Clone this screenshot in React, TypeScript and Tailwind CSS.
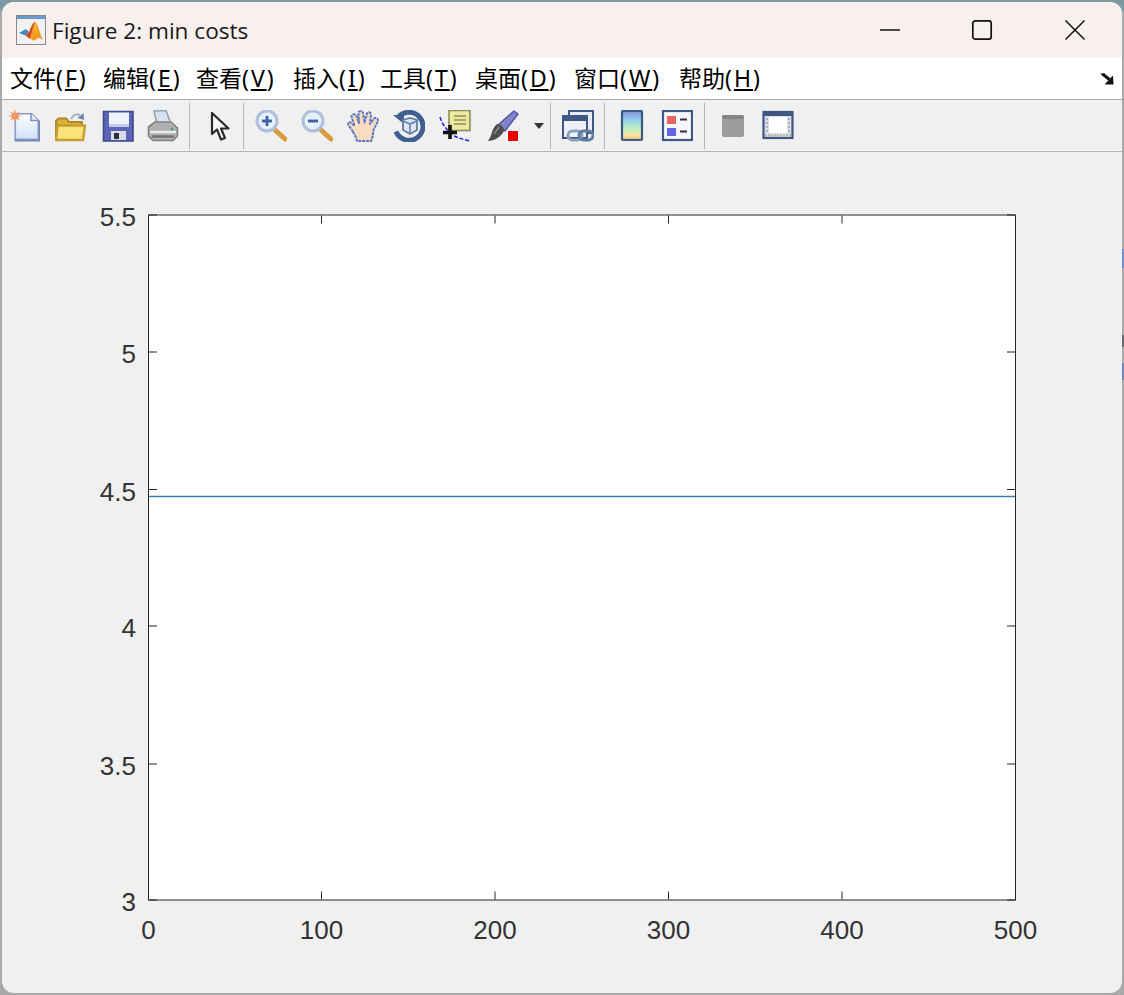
const MENUS = [
  { label: '文件', key: 'F', width: 'w-[93px]' },
  { label: '编辑', key: 'E', width: 'w-[93px]' },
  { label: '查看', key: 'V', width: 'w-[97px]' },
  { label: '插入', key: 'I', width: 'w-[87px]' },
  { label: '工具', key: 'T', width: 'w-[95px]' },
  { label: '桌面', key: 'D', width: 'w-[99px]' },
  { label: '窗口', key: 'W', width: 'w-[105px]' },
  { label: '帮助', key: 'H', width: 'w-[90px]' },
];

const Y_TICKS = [
  { y: 215, label: '5.5' },
  { y: 352, label: '5' },
  { y: 489.5, label: '4.5' },
  { y: 626, label: '4' },
  { y: 764, label: '3.5' },
  { y: 900, label: '3' },
];

const X_TICKS = [
  { x: 148.5, label: '0' },
  { x: 321.5, label: '100' },
  { x: 495, label: '200' },
  { x: 668.5, label: '300' },
  { x: 842, label: '400' },
  { x: 1015.5, label: '500' },
];

function Icon({ className, children }: { className?: string; children: React.ReactNode }) {
  return (
    <svg viewBox="0 0 32 32" className={`w-[32px] h-[32px] shrink-0 blur-[0.4px] ${className ?? ''}`}>
      {children}
    </svg>
  );
}

function Separator({ className }: { className: string }) {
  return <div className={`w-px h-[46px] shrink-0 bg-[#b5b5b5] ${className}`} />;
}

function NewIcon() {
  return (
    <Icon className="ml-[7px]">
      <defs>
        <linearGradient id="newFill" x1="0" y1="0" x2="0" y2="1">
          <stop offset="0" stopColor="#ffffff" />
          <stop offset="1" stopColor="#cfe2f6" />
        </linearGradient>
      </defs>
      <path d="M5.500 3H23L31 11V31.500H5.500Z" fill="#7486b8" />
      <path d="M6.500 4H22.500L29 10.500V29H6.500Z" fill="url(#newFill)" stroke="#8fa3cf" strokeWidth="1.200" strokeLinejoin="round" />
      <path d="M22 3.500V10.500H29.500" fill="#e2ebf7" stroke="#7c8fc0" strokeWidth="1.500" />
      <circle cx="6" cy="6" r="3.600" fill="#ee8048" />
      <path d="M6 0V12M0 6H12M2 2L10 10M10 2L2 10" stroke="#f2a070" strokeWidth="1.100" />
    </Icon>
  );
}

function OpenIcon() {
  return (
    <Icon className="ml-[13px]">
      <path d="M2 11V30H28V12H15L12.500 8.500H4.500Z" fill="#ddb13c" stroke="#a98a2f" strokeWidth="2" strokeLinejoin="round" />
      <path d="M2 30L3.500 15.500H31L29 30Z" fill="#fde27a" stroke="#c4a030" strokeWidth="2.400" strokeLinejoin="round" />
      <path d="M17 9C19 5 23 3.500 26 5" fill="none" stroke="#a5b0bf" strokeWidth="2" />
      <path d="M23.500 8L30 10L29.500 3Z" fill="#6f86a8" />
    </Icon>
  );
}

function SaveIcon() {
  return (
    <Icon className="ml-[16px]">
      <path d="M1.500 1.500H31V31H1.500Z" fill="#5a65ba" stroke="#3e4a8c" strokeWidth="1.600" />
      <path d="M7 2.500H27V17H7Z" fill="#eef1fa" />
      <path d="M7 14H27V17H7Z" fill="#c3cbe8" />
      <rect x="9" y="21" width="15" height="9" fill="#dcdde4" />
      <rect x="12" y="23" width="5" height="6" fill="#2b2f4e" />
    </Icon>
  );
}

function PrintIcon() {
  return (
    <Icon className="ml-[13px]">
      <path d="M7 1L19 0.500L24 14H10Z" fill="#d4e3f2" stroke="#98a3ae" strokeWidth="1.600" />
      <path d="M1.500 17L8 12H24L30.500 18V26L26 30.500H6L1.500 26Z" fill="#b0b0b0" stroke="#808080" strokeWidth="1.600" strokeLinejoin="round" />
      <path d="M3 22H29" stroke="#ececec" strokeWidth="2.400" />
      <path d="M5 26.500H27" stroke="#707070" strokeWidth="2.400" />
      <circle cx="25" cy="19" r="1.500" fill="#3fa66a" />
    </Icon>
  );
}

function PointerIcon() {
  return (
    <Icon className="ml-[14px]">
      <path d="M8 3V24L13 19.500L17 29.500L21 28L17 18.500H24.500Z" fill="#f8f8f8" stroke="#2a2a2a" strokeWidth="2.200" strokeLinejoin="round" />
    </Icon>
  );
}

function ZoomIcon({ className, plus }: { className: string; plus: boolean }) {
  return (
    <Icon className={className}>
      <path d="M20 20L30 29" stroke="#d89a3e" strokeWidth="5" strokeLinecap="round" />
      <circle cx="12" cy="11" r="10" fill="#e2f1fa" stroke="#b2bfdc" strokeWidth="3" />
      <path d="M7 11H17" stroke="#3f5fa8" strokeWidth="2.800" />
      {plus && <path d="M12 6V16" stroke="#3f5fa8" strokeWidth="2.800" />}
    </Icon>
  );
}

function HandIcon() {
  return (
    <Icon className="ml-[14px]">
      <path
        d="M6 22C4 18 0.500 15 1 13C2.500 11 6 14 7.500 16L4.500 7C4.500 4 8 3.500 9.500 6L12 13L11.500 2.500C12 0.500 15.500 0.500 16 3L17.500 12.500L20 3.500C21 1.500 24 2 24 5L23 14L27 8.500C28.500 7 31.500 8.500 31 11L26.500 20C26 25 25.500 28 24 31H10C9 27 8 25 6 22Z"
        fill="#f9dcc0"
        stroke="#5a78c0"
        strokeWidth="2"
        strokeDasharray="3 0.800"
        strokeLinejoin="round"
      />
    </Icon>
  );
}

function RotateIcon() {
  return (
    <Icon className="ml-[14px]">
      <path d="M5.500 7A14 14 0 1 1 3 21.500" fill="none" stroke="#3f5f93" strokeWidth="5" />
      <path d="M0 5H11V14Z" fill="#3f5f93" />
      <path d="M10 10L17 8L24 10V20L17 24L10 20Z" fill="#dfe6f0" stroke="#5f7da8" strokeWidth="1.800" />
      <path d="M10 11L17 14V23M17 14L24 11" fill="none" stroke="#5f7da8" strokeWidth="1.500" />
    </Icon>
  );
}

function DataCursorIcon() {
  return (
    <Icon className="ml-[14px]">
      <path d="M1 7C3 14 6 17 10 22C15 27 22 29 31 31" fill="none" stroke="#2222dd" strokeWidth="1.500" strokeDasharray="4 2" />
      <rect x="10" y="0.500" width="21" height="20" fill="#ecea9f" stroke="#8e8e5c" strokeWidth="1.600" />
      <path d="M15 6H27M15 10H27M15 14H27" stroke="#a8a46a" strokeWidth="1.800" />
      <path d="M11 15V29M4 22.500H18" stroke="#111111" strokeWidth="3.600" />
    </Icon>
  );
}

function BrushIcon() {
  return (
    <Icon className="ml-[16px]">
      <path d="M11 15L27 1L31 4L18 21Z" fill="#8085cf" stroke="#4f5599" strokeWidth="1.400" strokeLinejoin="round" />
      <path d="M10 14C14 14 18 18 17 21C14 27 7 31 1 31C5 27 4 19 10 14Z" fill="#4c4c4c" />
      <path d="M7 24L12 17" stroke="#8a8a8a" strokeWidth="1.500" />
      <rect x="20" y="20" width="12" height="12" fill="#ffffff" />
      <rect x="21" y="21" width="10" height="10" fill="#f00000" />
    </Icon>
  );
}

function LinkIcon() {
  return (
    <Icon className="ml-[11px]">
      <rect x="7" y="1" width="24" height="22" fill="#e8ecf4" stroke="#3f5784" strokeWidth="2" />
      <rect x="1" y="6" width="24" height="22" fill="#eef1f6" stroke="#3f5784" strokeWidth="2" />
      <path d="M1 6H25V11H1Z" fill="#3f5784" />
      <rect x="6" y="21" width="14" height="9" rx="4.500" fill="none" stroke="#8aa0bc" strokeWidth="3" />
      <rect x="17" y="21" width="14" height="9" rx="4.500" fill="none" stroke="#5f7ca3" strokeWidth="3" />
    </Icon>
  );
}

function ColorbarIcon() {
  return (
    <Icon className="ml-[11px]">
      <defs>
        <linearGradient id="barFill" x1="0" y1="0" x2="0" y2="1">
          <stop offset="0" stopColor="#8a8ee0" />
          <stop offset="0.3" stopColor="#8fd0ee" />
          <stop offset="0.6" stopColor="#c0eec0" />
          <stop offset="0.85" stopColor="#f5e49a" />
          <stop offset="1" stopColor="#f0b080" />
        </linearGradient>
      </defs>
      <rect x="6" y="1" width="20" height="29" rx="1" fill="url(#barFill)" stroke="#3f5784" strokeWidth="2.200" />
    </Icon>
  );
}

function LegendIcon() {
  return (
    <Icon className="ml-[13px]">
      <rect x="2" y="1" width="29" height="29" fill="#f6f7fa" stroke="#3f5784" strokeWidth="2.200" />
      <rect x="6" y="6" width="9" height="8" fill="#ea6464" />
      <rect x="6" y="18" width="9" height="8" fill="#6464ea" />
      <path d="M19 9.500H26M19 21.500H26" stroke="#333333" strokeWidth="2" />
    </Icon>
  );
}

function GreyIcon() {
  return (
    <Icon className="ml-[12px]">
      <rect x="5" y="5" width="22" height="22" rx="2" fill="#9c9c9c" />
      <rect x="5" y="5" width="22" height="4" rx="2" fill="#858585" />
    </Icon>
  );
}

function FrameIcon() {
  return (
    <Icon className="ml-[13px]">
      <rect x="1.500" y="2" width="29" height="26" fill="#d9dde5" stroke="#3f5784" strokeWidth="2.200" />
      <rect x="1.500" y="2" width="29" height="4" fill="#3f5784" />
      <rect x="7" y="7" width="18" height="16" fill="#ffffff" />
      <path d="M3 25.500H29" stroke="#b6b69a" strokeWidth="2" strokeDasharray="2 1" />
      <path d="M4 9H6M4 13H6M4 17H6M4 21H6M26 9H28M26 13H28M26 17H28M26 21H28" stroke="#9aa5bb" strokeWidth="1.500" />
    </Icon>
  );
}

function Logo() {
  return (
    <svg viewBox="0 0 30 30" className="w-[30px] h-[30px] shrink-0">
      <rect x="0.500" y="0.500" width="29" height="29" fill="#f1f1f1" stroke="#8a8a8a" />
      <rect x="1" y="1" width="28" height="3" fill="#6a9ac8" />
      <path d="M3 18L10 14L13 17L9.500 20.500Z" fill="#3f8bc4" />
      <path d="M9.500 20.500L13 17C15 12 17 7 19 7L14 24Z" fill="#d4491c" />
      <path d="M19 7C21 7 23 16 27 25C24 22.500 22 22 19.500 25C18 26.500 16 25 14 23C16 17 17.500 10 19 7Z" fill="#f39a22" />
      <path d="M19 8C20 9 21 15 20 19C19 16 18 12 19 8Z" fill="#f7c23a" />
    </svg>
  );
}

export default function App() {
  return (
    <div className="relative w-[1124px] h-[995px] overflow-hidden p-[2px] bg-gradient-to-b from-[#7b9aa1] from-[8px] to-[#a9a9a9] to-[14px]">
      <div className="flex flex-col w-full h-full rounded-[12px] overflow-hidden bg-[#f0f0f0]">
        {/* title bar */}
        <div className="flex items-center h-[56px] shrink-0 bg-[#f7f0ee] font-['Open_Sans','Noto_Sans',sans-serif] text-[#1a1a1a]">
          <div className="ml-[14px]">
            <Logo />
          </div>
          <span className="ml-[6px] pt-[2px] text-[22.6px] leading-none">Figure 2: min costs</span>
          <div className="flex items-center ml-auto">
            <svg viewBox="0 0 22 22" className="w-[22px] h-[22px] mr-[70px]">
              <path d="M1 11H21" stroke="#111111" strokeWidth="1.600" />
            </svg>
            <svg viewBox="0 0 22 22" className="w-[22px] h-[22px] mr-[71px]">
              <rect x="1.800" y="1.800" width="18.400" height="18.400" rx="2.500" fill="none" stroke="#111111" strokeWidth="1.700" />
            </svg>
            <svg viewBox="0 0 22 22" className="w-[22px] h-[22px] mr-[36px]">
              <path d="M1.500 1.500L20.500 20.500M20.500 1.500L1.500 20.500" stroke="#111111" strokeWidth="1.500" />
            </svg>
          </div>
        </div>

        {/* menu bar */}
        <div className="flex items-center h-[42px] shrink-0 pl-[8px] pr-[8px] bg-white border-b border-[#a9a9a9] text-black font-['Noto_Sans','Noto_Sans_CJK_SC',sans-serif] text-[23px] leading-none">
          {MENUS.map((menu) => (
            <div key={menu.key} className={`${menu.width} shrink-0 whitespace-nowrap`}>
              {menu.label}
              <span className="tracking-[2px]">
                (<span className="underline underline-offset-2">{menu.key}</span>)
              </span>
            </div>
          ))}
          <svg viewBox="0 0 14 12" className="w-[14px] h-[12px] ml-auto">
            <path d="M0 0.500H5V2H1.500Z" fill="#333333" />
            <path d="M2.500 1L9.500 6.500" stroke="#111111" strokeWidth="3" />
            <path d="M13 2.500L13.500 11.500H4.500Z" fill="#111111" />
          </svg>
        </div>

        {/* toolbar */}
        <div className="flex items-center h-[52px] shrink-0 bg-[#f0f0f0] border-b border-[#b5b5b5]">
          <NewIcon />
          <OpenIcon />
          <SaveIcon />
          <PrintIcon />
          <Separator className="ml-[10px]" />
          <PointerIcon />
          <Separator className="ml-[7px]" />
          <ZoomIcon className="ml-[11px]" plus />
          <ZoomIcon className="ml-[14px]" plus={false} />
          <HandIcon />
          <RotateIcon />
          <DataCursorIcon />
          <BrushIcon />
          <div className="ml-[15px] w-0 h-0 shrink-0 border-x-[5px] border-x-transparent border-t-[6px] border-t-[#333333]" />
          <Separator className="ml-[6px]" />
          <LinkIcon />
          <Separator className="ml-[10px]" />
          <ColorbarIcon />
          <LegendIcon />
          <Separator className="ml-[11px]" />
          <GreyIcon />
          <FrameIcon />
        </div>

        {/* plot */}
        <div className="flex-1 min-h-0">
          <svg viewBox="2 153 1120 840" className="block w-full h-full" fontFamily="'Liberation Sans', Arial, sans-serif" fontSize="26" fill="#333333">
            <rect x="148.500" y="215.500" width="867" height="685" fill="#ffffff" stroke="#262626" strokeWidth="1" />
            <path d="M149 497H1015" stroke="#3b7fa6" strokeWidth="1.300" />
            {Y_TICKS.map((tick) => (
              <g key={tick.label}>
                <path d={`M149 ${tick.y + 0.5}H157M1015 ${tick.y + 0.5}H1007`} stroke="#262626" strokeWidth="1" />
                <text x="136" y={tick.y + 11.5} textAnchor="end">{tick.label}</text>
              </g>
            ))}
            {X_TICKS.map((tick) => (
              <g key={tick.label}>
                <path d={`M${tick.x} 900V892M${tick.x} 216V224`} stroke="#262626" strokeWidth="1" />
                <text x={tick.x} y="939" textAnchor="middle">{tick.label}</text>
              </g>
            ))}
          </svg>
        </div>
      </div>

      {/* bits of the desktop showing behind the window edge */}
      <div className="absolute right-0 top-[249px] w-[2px] h-[19px] bg-[#6a8fd0]" />
      <div className="absolute right-0 top-[335px] w-[2px] h-[12px] bg-[#66666e]" />
      <div className="absolute right-0 top-[363px] w-[2px] h-[17px] bg-[#6d86c4]" />
    </div>
  );
}
